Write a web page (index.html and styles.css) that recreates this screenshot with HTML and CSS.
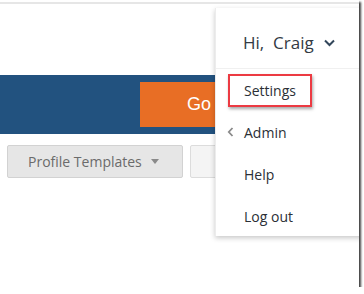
FILE: index.html
```html
<!DOCTYPE html>
<html>
<head>
<meta charset="utf-8">
<link rel="stylesheet" href="styles.css">
</head>
<body>
<div class="frame">
  <div class="topline"></div>
  <div class="header"></div>
  <div class="bluebar">
    <div class="go-btn">Go to</div>
  </div>
  <div class="toolbar">
    <div class="btn btn-profile">Profile Templates <span class="caret"></span></div>
    <div class="btn btn-light"></div>
  </div>

  <div class="dropdown">
    <div class="dd-head">
      <span class="greet">Hi, &nbsp;Craig</span>
      <svg class="chev" width="11" height="8" viewBox="0 0 11 8"><path d="M1 1.5 L5.5 6 L10 1.5" fill="none" stroke="#33475b" stroke-width="2"/></svg>
    </div>
    <ul class="menu">
      <li class="item">Settings</li>
      <li class="item"><svg class="left-chev" width="7" height="10" viewBox="0 0 7 10"><path d="M5.5 1 L1.8 5 L5.5 9" fill="none" stroke="#8a8a8a" stroke-width="1.8"/></svg>Admin</li>
      <li class="item">Help</li>
      <li class="item">Log out</li>
    </ul>
  </div>
  <div class="highlight"></div>
</div>
</body>
</html>
```
FILE: styles.css
```css
html, body {
  margin: 0;
  padding: 0;
  background: #ffffff;
}
body {
  font-family: "Open Sans", "DejaVu Sans", sans-serif;
}
.frame {
  position: relative;
  width: 359px;
  height: 287px;
  background: #ffffff;
  box-shadow: 2px 2px 2px 0 rgba(0, 0, 0, 0.75);
  overflow: hidden;
}
.topline {
  margin-top: 2px;
  height: 2px;
  background: #e6e6e6;
}
.header {
  height: 71px;
}
.bluebar {
  height: 59px;
  background: #22527f;
  display: flex;
  align-items: center;
  padding-left: 140px;
}
.go-btn {
  width: 160px;
  height: 45px;
  background: #e86e25;
  color: #ffffff;
  font-family: "Liberation Sans", Arial, sans-serif;
  font-size: 18px;
  line-height: 45px;
  padding-left: 47px;
  box-sizing: border-box;
}
.toolbar {
  display: flex;
  gap: 7px;
  padding: 11px 0 0 7px;
}
.btn {
  height: 33px;
  box-sizing: border-box;
  border-radius: 2px;
  display: flex;
  align-items: center;
}
.btn-profile {
  width: 176px;
  background: #e6e6e6;
  border: 1px solid #d2d2d2;
  color: #6b6b6b;
  font-size: 14px;
  padding-left: 20px;
}
.caret {
  display: inline-block;
  width: 0;
  height: 0;
  margin-left: 9px;
  border-left: 4px solid transparent;
  border-right: 4px solid transparent;
  border-top: 5px solid #8a8a8a;
}
.btn-light {
  width: 120px;
  background: #f4f4f4;
  border: 1px solid #dcdcdc;
}
.dropdown {
  position: absolute;
  left: 215px;
  top: 8px;
  width: 150px;
  height: 228px;
  background: #ffffff;
  border-left: 1px solid #ececec;
  box-shadow: 0 2px 5px rgba(0, 0, 0, 0.22);
  color: #333333;
}
.dd-head {
  height: 61px;
  box-sizing: border-box;
  border-bottom: 1px solid #f0f0f0;
  display: flex;
  align-items: center;
  padding: 8px 0 0 27px;
}
.greet {
  font-size: 17px;
  color: #333a44;
}
.chev {
  margin-left: 10px;
  margin-top: 2px;
}
.menu {
  list-style: none;
  margin: 0;
  padding: 0;
}
.item {
  position: relative;
  height: 42px;
  display: flex;
  align-items: center;
  padding-left: 28px;
  font-size: 14px;
  color: #2b2f36;
}
.left-chev {
  position: absolute;
  left: 11px;
  top: 16px;
}
.highlight {
  position: absolute;
  left: 228px;
  top: 74px;
  width: 84px;
  height: 33px;
  box-sizing: border-box;
  border: 2px solid #ec3a42;
  box-shadow: 1px 2px 3px rgba(0, 0, 0, 0.35);
}
```
